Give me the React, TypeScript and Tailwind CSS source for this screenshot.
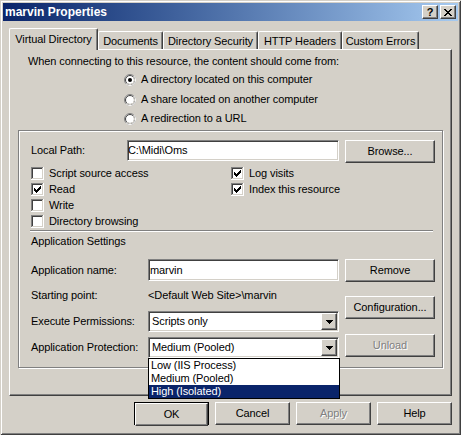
import React from 'react';

const raised =
  'bg-[#d4d0c8] border border-white border-r-[#404040] border-b-[#404040] shadow-[inset_-1px_-1px_0_#808080,inset_1px_1px_0_#d4d0c8]';
const sunken =
  'bg-white border border-[#808080] border-r-white border-b-white shadow-[inset_1px_1px_0_#404040,inset_-1px_-1px_0_#d4d0c8]';
const greyed = 'text-[#808080] [text-shadow:1px_1px_0_#fff]';

function Check({ on }: { on?: boolean }) {
  return (
    <svg width="13" height="13" viewBox="0 0 13 13" shapeRendering="crispEdges" className="shrink-0">
      <rect width="13" height="13" fill="#fff" />
      <rect width="12" height="1" fill="#808080" />
      <rect width="1" height="12" fill="#808080" />
      <rect x="1" y="1" width="10" height="1" fill="#404040" />
      <rect x="1" y="1" width="1" height="10" fill="#404040" />
      <rect x="1" y="11" width="11" height="1" fill="#d4d0c8" />
      <rect x="11" y="1" width="1" height="11" fill="#d4d0c8" />
      {on && (
        <path
          d="M9 3h1v1H9z M8 4h2v1H8z M3 5h1v1H3z M7 5h3v1H7z M3 6h2v1H3z M6 6h3v1H6z M3 7h5v1H3z M4 8h3v1H4z M5 9h1v1H5z"
          fill="#000"
        />
      )}
    </svg>
  );
}

function Radio({ on }: { on?: boolean }) {
  return (
    <svg width="12" height="12" viewBox="0 0 12 12" className="shrink-0">
      <circle cx="6" cy="6" r="5.5" fill="#fff" stroke="#808080" />
      <path d="M9.89 2.11 A5.5 5.5 0 0 1 2.11 9.89" fill="none" stroke="#fff" />
      <circle cx="6" cy="6" r="4.5" fill="none" stroke="#404040" />
      <path d="M9.18 2.82 A4.5 4.5 0 0 1 2.82 9.18" fill="none" stroke="#d4d0c8" />
      {on && <circle cx="6" cy="6" r="2" fill="#000" />}
    </svg>
  );
}

function Btn({ label, disabled, className = '' }: { label: string; disabled?: boolean; className?: string }) {
  return (
    <div className={`${raised} h-[23px] flex items-center justify-center ${disabled ? greyed : ''} ${className}`}>
      {label}
    </div>
  );
}

function Combo({ value, children }: { value: string; children?: React.ReactNode }) {
  return (
    <div className={`relative w-[191px] h-[21px] ${sunken} flex items-center`}>
      <span className="flex-1 pl-[3px]">{value}</span>
      <div className={`${raised} w-[16px] h-[17px] mr-px flex items-center justify-center`}>
        <svg width="7" height="4" viewBox="0 0 7 4" shapeRendering="crispEdges">
          <path d="M0 0h7v1H0z M1 1h5v1H1z M2 2h3v1H2z M3 3h1v1H3z" fill="#000" />
        </svg>
      </div>
      {children}
    </div>
  );
}

const tabs = [
  { label: 'Documents', w: 'w-[65px]' },
  { label: 'Directory Security', w: 'w-[95px]' },
  { label: 'HTTP Headers', w: 'w-[84px]' },
  { label: 'Custom Errors', w: 'w-[77px]' },
];

const checks = [
  { label: 'Script source access', on: false },
  { label: 'Log visits', on: true },
  { label: 'Read', on: true },
  { label: 'Index this resource', on: true },
  { label: 'Write', on: false },
  null,
  { label: 'Directory browsing', on: false },
  null,
];

const protection = ['Low (IIS Process)', 'Medium (Pooled)', 'High (Isolated)'];

export default function App() {
  return (
    <div className="w-[461px] h-[435px] bg-[#d4d0c8] p-[3px] flex flex-col font-['Liberation_Sans',Arial,sans-serif] text-[11px] leading-[13px] tracking-[-0.1px] text-black shadow-[inset_1px_1px_0_#d4d0c8,inset_-1px_-1px_0_#404040,inset_2px_2px_0_#fff,inset_-2px_-2px_0_#808080]">
      {/* title bar */}
      <div className="h-[18px] flex items-center bg-gradient-to-r from-[#0a246a] to-[#a6caf0] pr-[2px]">
        <span className="pl-[2px] flex-1 text-white font-bold text-[12px] tracking-normal">marvin Properties</span>
        <div className={`${raised} w-[16px] h-[14px] flex items-center justify-center font-bold text-[11px] leading-none`}>?</div>
        <div className={`${raised} w-[16px] h-[14px] ml-[2px] flex items-center justify-center`}>
          <svg width="8" height="7" viewBox="0 0 8 7" shapeRendering="crispEdges">
            <path
              d="M0 0h2v1H0z M6 0h2v1H6z M1 1h2v1H1z M5 1h2v1H5z M2 2h4v1H2z M3 3h2v1H3z M2 4h4v1H2z M1 5h2v1H1z M5 5h2v1H5z M0 6h2v1H0z M6 6h2v1H6z"
              fill="#000"
            />
          </svg>
        </div>
      </div>

      {/* tabs */}
      <div className="mt-[7px] ml-[6px] h-[21px] flex items-end">
        <div className="relative z-10 w-[89px] h-[22px] -mb-px bg-[#d4d0c8] border-l border-t border-white border-r border-r-[#404040] shadow-[inset_-1px_0_0_#808080] rounded-t-[2px] flex items-center justify-center">
          Virtual Directory
        </div>
        {tabs.map(t => (
          <div
            key={t.label}
            className={`${t.w} h-[18px] border-l border-t border-white border-r border-r-[#404040] shadow-[inset_-1px_0_0_#808080] rounded-t-[2px] flex items-center justify-center pt-px`}
          >
            {t.label}
          </div>
        ))}
      </div>

      {/* panel */}
      <div className="ml-[6px] w-[443px] h-[347px] border border-white border-r-[#404040] border-b-[#404040] shadow-[inset_-1px_-1px_0_#808080] flex flex-col">
        <div className="mt-[5px] pl-[18px]">When connecting to this resource, the content should come from:</div>
        <div className="ml-[114px] mt-[5px] flex flex-col">
          <div className="h-[13px] flex items-center gap-[5px]">
            <Radio on />
            A directory located on this computer
          </div>
          <div className="h-[13px] mt-[7px] flex items-center gap-[5px]">
            <Radio />
            A share located on another computer
          </div>
          <div className="h-[13px] mt-[6px] flex items-center gap-[5px]">
            <Radio />
            A redirection to a URL
          </div>
        </div>

        {/* group box */}
        <div className="ml-[8px] mt-[5px] w-[425px] h-[238px] border border-[#808080] shadow-[inset_1px_1px_0_#fff,1px_1px_0_#fff] pl-[12px] pt-[9px] flex flex-col">
          <div className="flex items-start">
            <div className="w-[96px] h-[21px] flex items-center">Local Path:</div>
            <div className={`${sunken} w-[212px] h-[21px] flex items-center`}>C:\Midi\Oms</div>
            <Btn label="Browse..." className="ml-[6px] w-[90px]" />
          </div>

          <div className="mt-[4px] grid grid-cols-[200px_auto] gap-y-[3px]">
            {checks.map((c, i) =>
              c ? (
                <div key={i} className="h-[13px] flex items-center gap-[5px]">
                  <Check on={c.on} />
                  {c.label}
                </div>
              ) : (
                <div key={i} className="h-[13px]" />
              )
            )}
          </div>

          <div className="mt-[2px] -ml-px w-[403px] h-[2px] border-t border-t-[#808080] border-b border-b-white" />
          <div className="mt-[3px]">Application Settings</div>

          <div className="mt-[11px] flex items-start">
            <div className="w-[308px] flex flex-col">
              <div className="h-[22px] flex items-center">
                <span className="w-[117px]">Application name:</span>
                <div className={`${sunken} w-[191px] h-[22px] flex items-center pl-px`}>marvin</div>
              </div>
              <div className="mt-[8px] h-[13px] flex items-center">
                <span className="w-[117px]">Starting point:</span>
                <span>&lt;Default Web Site&gt;\marvin</span>
              </div>
              <div className="mt-[9px] h-[21px] flex items-center">
                <span className="w-[117px]">Execute Permissions:</span>
                <Combo value="Scripts only" />
              </div>
              <div className="mt-[5px] h-[21px] flex items-center">
                <span className="w-[117px]">Application Protection:</span>
                <Combo value="Medium (Pooled)">
                  <div className="absolute left-[-1px] top-[20px] z-20 w-[192px] bg-white border border-black flex flex-col">
                    {protection.map(p => (
                      <div
                        key={p}
                        className={`h-[13px] pl-[2px] flex items-center ${p === 'High (Isolated)' ? 'bg-[#0a246a] text-white' : ''}`}
                      >
                        {p}
                      </div>
                    ))}
                  </div>
                </Combo>
              </div>
            </div>
            <div className="ml-[6px] w-[90px] flex flex-col">
              <Btn label="Remove" />
              <Btn label="Configuration..." className="mt-[14px]" />
              <Btn label="Unload" disabled className="mt-[15px]" />
            </div>
          </div>
        </div>
      </div>

      {/* dialog buttons */}
      <div className="mt-[6px] pr-[6px] flex justify-end gap-[6px]">
        <div className="w-[75px] h-[23px] border border-black">
          <Btn label="OK" className="h-[21px]" />
        </div>
        <Btn label="Cancel" className="w-[75px]" />
        <Btn label="Apply" disabled className="w-[75px]" />
        <Btn label="Help" className="w-[75px]" />
      </div>
    </div>
  );
}
